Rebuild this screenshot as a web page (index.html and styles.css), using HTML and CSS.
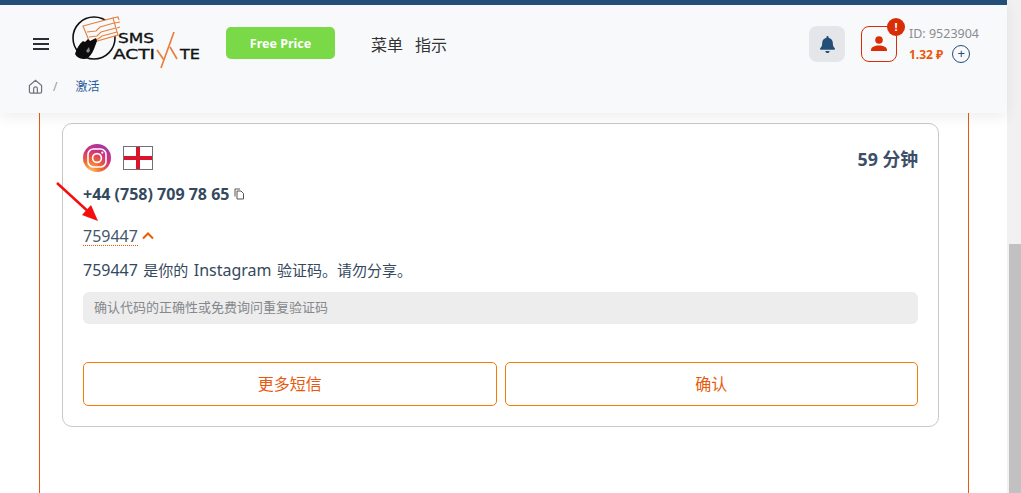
FILE: index.html
```html
<!DOCTYPE html>
<html lang="zh">
<head>
<meta charset="utf-8">
<title>SMS Activate</title>
<link rel="stylesheet" href="styles.css">
</head>
<body>
<div class="app">
  <div class="page">
    <header class="header">
      <div class="topline"></div>
      <div class="navrow">
        <svg class="burger" width="18" height="14" viewBox="0 0 18 14"><path d="M1 2h16M1 7h16M1 12h16" stroke="#2b2f33" stroke-width="2"/></svg>
        <svg class="logo" width="132" height="60" viewBox="0 0 132 60">
          <circle cx="24" cy="24" r="21" fill="none" stroke="#111" stroke-width="1.600"/>
          <g fill="none" stroke="#e8803f" stroke-width="1.100">
            <path d="M13 12l30-8 5 17-28 8z" fill="#f8f9fb"/>
            <path d="M17 18l9-1 4-4 14-4M19 23l8-1 4-4 15-4M22 27l6-2 4-3 15-4M43 4l5-1 1 3M45 9l5-1M47 14l3-1"/>
          </g>
          <path d="M5 40c2-6 4-10 8-13l2 1 3-3 2 2 6-3 1 3-3 8c-2 5-5 9-9 10-4 0-8-1-10-5z" fill="#0c0c0c"/>
          <path d="M16 37l3-4 1 4-2 2z" fill="#8a8a8a"/>
          <text x="48" y="29" class="logo-text" textLength="36" lengthAdjust="spacingAndGlyphs">SMS</text>
          <text x="43" y="45" class="logo-text" textLength="42" lengthAdjust="spacingAndGlyphs">ACTI</text>
          <text x="110" y="45" class="logo-text" textLength="20" lengthAdjust="spacingAndGlyphs">TE</text>
          <path d="M87 36l7 10M104 18L91 54M100 33l7 12" fill="none" stroke="#e8803f" stroke-width="1.700"/>
        </svg>
        <a class="free">Free Price</a>
        <nav class="menu"><span>菜单</span><span>指示</span></nav>
        <div class="spacer"></div>
        <div class="bell">
          <svg width="15" height="17" viewBox="0 0 448 512"><path fill="#234e78" d="M224 512c35 0 64-29 64-64H160c0 35 29 64 64 64zm216-150c-19-21-56-52-56-154 0-78-54-140-128-155V32a32 32 0 1 0-64 0v21C118 68 64 130 64 208c0 102-37 133-56 154-6 6-8 13-8 22 0 16 13 32 32 32h384c19 0 32-16 32-32 0-9-2-16-8-22z"/></svg>
        </div>
        <div class="user">
          <svg width="18" height="18" viewBox="0 0 18 18"><circle cx="9" cy="5" r="3.800" fill="#d92d06"/><path d="M1 16v-1c0-3 3.500-4.500 8-4.500s8 1.500 8 4.500v1z" fill="#d92d06"/></svg>
          <span class="badge">!</span>
        </div>
        <div class="account">
          <div class="acc-id">ID: 9523904</div>
          <div class="acc-bal"><span class="money">1.32 ₽</span><span class="plus">+</span></div>
        </div>
      </div>
      <div class="crumbs">
        <svg width="15" height="15" viewBox="0 0 16 16"><path d="M1.500 7L8 1.500 14.500 7v6.500a1.500 1.500 0 0 1-1.500 1.500H3a1.500 1.500 0 0 1-1.500-1.500z M6 15v-4.500a2 2 0 0 1 4 0V15" fill="none" stroke="#70757a" stroke-width="1.300"/></svg>
        <span class="slash">/</span>
        <span class="crumb">激活</span>
      </div>
    </header>
    <main class="panel">
      <section class="card">
        <div class="card-top">
          <div class="icons">
            <svg width="28" height="28" viewBox="0 0 28 28">
              <defs>
                <radialGradient id="ig" cx="0.25" cy="1" r="1.200">
                  <stop offset="0" stop-color="#fdc468"/>
                  <stop offset="0.35" stop-color="#f0662f"/>
                  <stop offset="0.65" stop-color="#d1307c"/>
                  <stop offset="1" stop-color="#8a3ab9"/>
                </radialGradient>
              </defs>
              <circle cx="14" cy="14" r="14" fill="url(#ig)"/>
              <rect x="5" y="5" width="18" height="18" rx="5.500" fill="none" stroke="#fff" stroke-width="1.600"/>
              <circle cx="14" cy="14" r="4.400" fill="none" stroke="#fff" stroke-width="1.600"/>
              <circle cx="19.300" cy="8.700" r="1.100" fill="#fff"/>
            </svg>
            <svg class="flag" width="30" height="24" viewBox="0 0 30 24"><rect x="0.500" y="0.500" width="29" height="23" fill="#fff" stroke="#6c7278"/><path d="M13 1h4v22h-4zM1 10h28v4H1z" fill="#d9142c"/></svg>
          </div>
          <div class="timer">59 分钟</div>
        </div>
        <div class="phone">+44 (758) 709 78 65
          <svg width="11" height="12" viewBox="0 0 11 12"><path d="M1 8.500V1h5M3 3h4l2.500 2.500V11H3z" fill="none" stroke="#555" stroke-width="1"/></svg>
        </div>
        <div class="code-row"><span class="code">759447</span>
          <svg width="12" height="8" viewBox="0 0 12 8"><path d="M1 6.500l5-5 5 5" fill="none" stroke="#e85d04" stroke-width="2"/></svg>
        </div>
        <p class="message"><span class="latin">759447</span> 是你的 <span class="latin">Instagram</span> 验证码。请勿分享。</p>
        <div class="hint">确认代码的正确性或免费询问重复验证码</div>
        <div class="actions">
          <button class="btn">更多短信</button>
          <button class="btn">确认</button>
        </div>
      </section>
      <svg class="arrow" width="46" height="42" viewBox="0 0 46 42"><path d="M1 1L36 33" stroke="#f50d0d" stroke-width="2.500"/><path d="M42 39L26 33 35 23z" fill="#f50d0d"/></svg>
    </main>
  </div>
  <aside class="scrollbar"><div class="thumb"></div></aside>
</div>
</body>
</html>
```
FILE: styles.css
```css
* { box-sizing: border-box; }
html, body { margin: 0; height: 100%; overflow: hidden; background: #fff; }
body { font-family: "Noto Sans", "Noto Sans CJK SC", sans-serif; color: #34495e; }
.app { display: flex; height: 493px; }
.page { width: 1007px; position: relative; }
.scrollbar { width: 14px; background: #f1f1f1; padding: 244px 0 0 2px; }
.thumb { height: 249px; background: #c1c1c1; }

.header { height: 113px; background: #f8f9fb; box-shadow: 0 4px 14px rgba(0,0,0,.07); position: relative; z-index: 2; }
.topline { height: 5px; background: #234e78; }
.navrow { display: flex; align-items: center; height: 68px; padding: 10px 28px 0 32px; }
.burger { flex: none; }
.logo { flex: none; margin-left: 20px; }
.logo-text { font: 400 14px "DejaVu Sans", sans-serif; fill: #111; stroke: #111; stroke-width: .35px; }
.free { margin-left: 24px; width: 109px; height: 32px; border-radius: 5px; background: #79d947; color: #fff; font-weight: 700; font-size: 12.500px; display: flex; align-items: center; justify-content: center; margin-top: -2px; }
.menu { display: flex; gap: 12px; margin-left: 36px; font-size: 16px; color: #333; }
.spacer { flex: 1; }
.bell { width: 36px; height: 36px; border-radius: 8px; background: #e4e6ea; display: flex; align-items: center; justify-content: center; }
.user { width: 36px; height: 36px; margin-left: 16px; border: 1px solid #d92d06; border-radius: 8px; display: flex; align-items: center; justify-content: center; position: relative; }
.badge { position: absolute; top: -9px; right: -9px; width: 18px; height: 18px; border-radius: 50%; background: #d92d06; color: #fff; font-size: 11px; font-weight: 700; line-height: 18px; text-align: center; }
.account { margin-left: 12px; width: 70px; }
.acc-id { font-size: 12.500px; color: #8a8d91; line-height: 18px; }
.acc-bal { display: flex; align-items: center; gap: 9px; margin-top: 2px; }
.money { font-size: 12px; font-weight: 700; color: #ea580c; }
.plus { width: 18px; height: 18px; border: 1px solid #234e78; border-radius: 50%; color: #234e78; font-size: 13px; line-height: 15px; text-align: center; }

.crumbs { display: flex; align-items: center; margin-top: 3px; padding-left: 28px; height: 20px; }
.slash { margin-left: 10px; color: #999; font-size: 12px; }
.crumb { margin-left: 18px; font-size: 12px; color: #2a5a9c; }

.panel { position: relative; height: 380px; margin: 0 38px 0 39px; border-left: 1px solid #ea580c; border-right: 1px solid #ea580c; padding: 10px 29px 0 22px; }
.card { height: 304px; border: 1px solid #c8c8c8; border-radius: 10px; padding: 20px 20px 0; background: #fff; }
.card-top { display: flex; justify-content: space-between; align-items: center; height: 28px; }
.icons { display: flex; align-items: center; gap: 12px; }
.timer { font-size: 17.800px; font-weight: 700; color: #3d4f68; }
.phone { margin-top: 12px; font-size: 16px; font-weight: 700; line-height: 20px; color: #34495e; display: flex; align-items: center; gap: 5px; }
.code-row { margin-top: 22px; display: flex; align-items: center; gap: 4px; height: 20px; }
.code { font-size: 16px; color: #44566c; border-bottom: 1px dotted #ea580c; line-height: 18px; }
.message { margin: 14px 0 0; font-size: 15px; line-height: 20px; color: #34495e; word-spacing: 1.500px; }
.latin { font-size: 16px; }
.hint { margin-top: 12px; height: 32px; border-radius: 6px; background: #ededed; color: #85888c; font-size: 13px; line-height: 31px; padding-left: 11px; }
.actions { display: flex; gap: 8px; margin-top: 38px; }
.btn { flex: 1; height: 44px; padding: 0 0 2px; background: #fff; border: 1px solid #f57c00; border-radius: 5px; color: #e8590c; font: 16px "Noto Sans", "Noto Sans CJK SC", sans-serif; }
.arrow { position: absolute; left: 16px; top: 69px; }
```
